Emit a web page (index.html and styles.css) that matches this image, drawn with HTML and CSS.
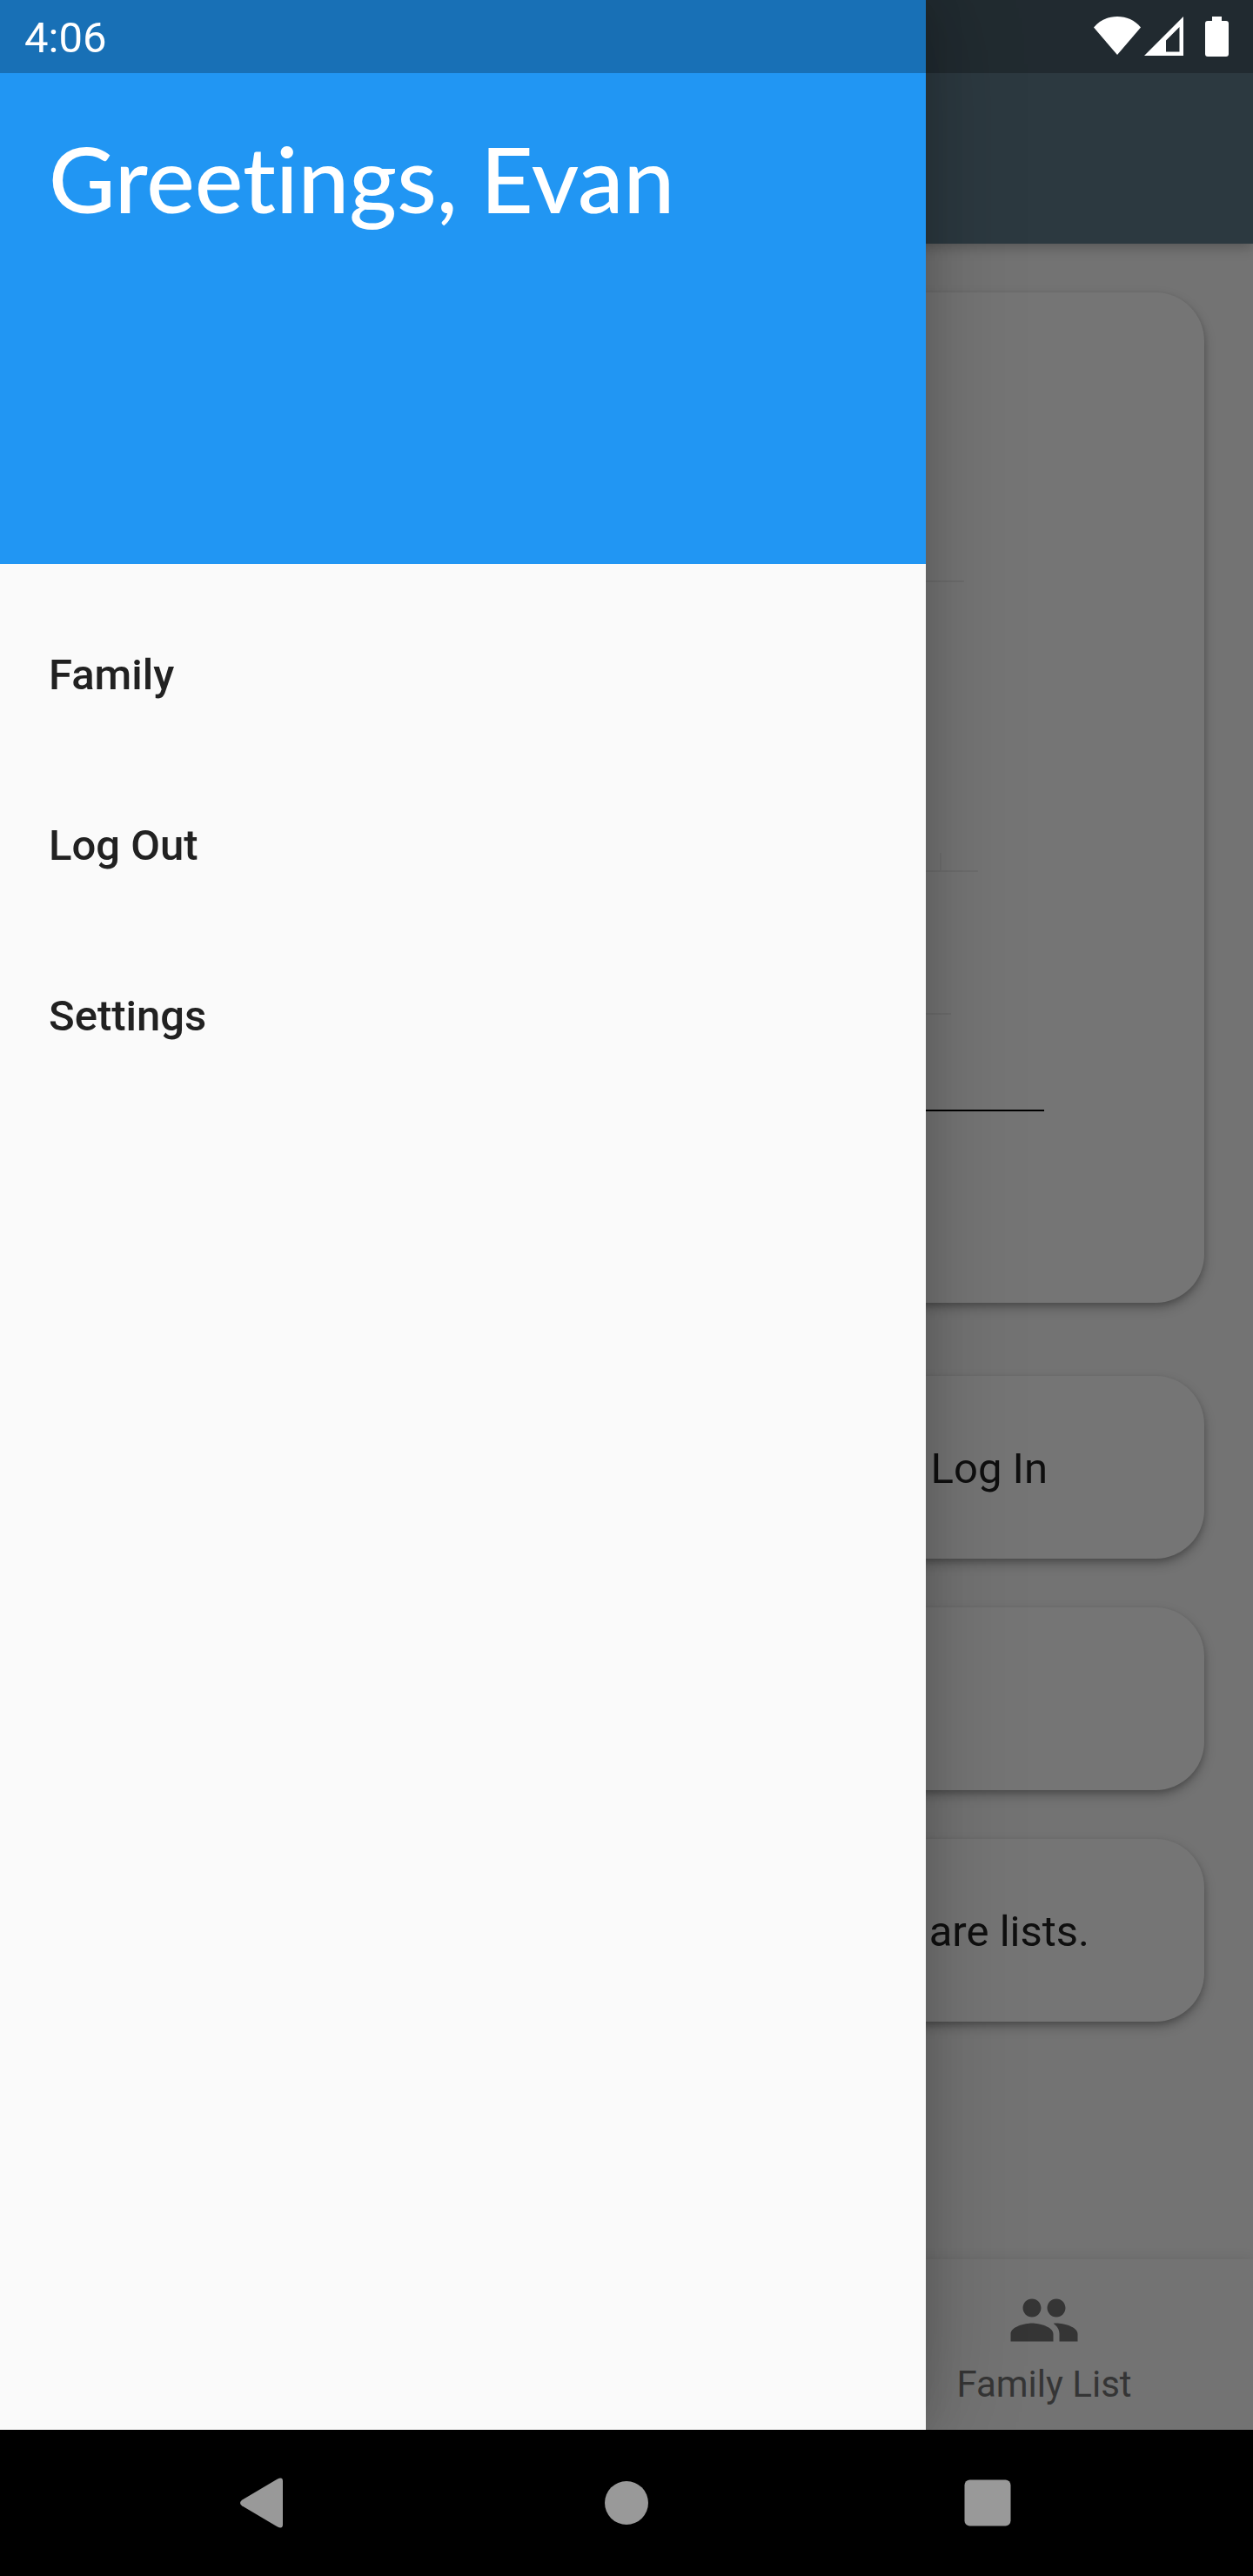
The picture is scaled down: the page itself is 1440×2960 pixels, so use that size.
FILE: index.html
```html
<!DOCTYPE html>
<html lang="en">
<head>
  <meta charset="utf-8">
  <meta name="viewport" content="width=device-width, initial-scale=1">
  <title>Family</title>
  <link rel="stylesheet" href="styles.css">
</head>
<body>
  <div class="screen">
    <div class="app">
      <div class="page">
        <header class="app-bar"></header>
        <main class="content">
          <section class="card card-form">
            <hr class="rule rule-first">
            <span class="tick"></span>
            <hr class="rule rule-second">
            <hr class="rule rule-third">
            <input class="field" type="text" aria-label="Name">
          </section>
          <button class="card card-row" type="button">Log In</button>
          <div class="card card-row"></div>
          <div class="card card-row card-wide">are lists.</div>
        </main>
        <nav class="tabs" aria-label="Sections">
          <button class="tab" type="button">
            <svg class="tab-icon" viewBox="0 0 24 24" aria-hidden="true"><path d="M16 11c1.660 0 2.990-1.340 2.990-3S17.660 5 16 5s-3 1.340-3 3 1.340 3 3 3zm-8 0c1.660 0 2.990-1.340 2.990-3S9.660 5 8 5 5 6.340 5 8s1.340 3 3 3zm0 2c-2.330 0-7 1.170-7 3.500V19h14v-2.500c0-2.330-4.670-3.500-7-3.500zm8 0c-.29 0-.62.020-.97.050 1.160.84 1.970 1.970 1.970 3.450V19h6v-2.500c0-2.330-4.670-3.500-7-3.500z"/></svg>
            <span>Family List</span>
          </button>
        </nav>
      </div>
      <div class="scrim"></div>
      <aside class="drawer">
        <header class="drawer-header">
          <h1 class="greeting">Greetings, Evan</h1>
        </header>
        <nav class="menu" aria-label="Menu">
          <a class="menu-item" href="#family">Family</a>
          <a class="menu-item" href="#logout">Log Out</a>
          <a class="menu-item" href="#settings">Settings</a>
        </nav>
      </aside>
      <div class="status-bar">
        <span class="clock">4:06</span>
        <div class="status-icons">
          <svg width="54" height="46" viewBox="0 0 54 46" aria-hidden="true"><path d="M0 12.500C7 4 16.500 0 27 0s20 4 27 12.500L27 44z"/></svg>
          <svg width="46" height="46" viewBox="0 0 46 46" aria-hidden="true"><path fill-rule="evenodd" d="M45 0v45H0zM40.500 12L25 27.500V40.500h15.500z"/></svg>
          <svg class="battery" width="27" height="46" viewBox="0 0 27 46" aria-hidden="true"><path d="M8 0h11v5h5a3 3 0 0 1 3 3v35a3 3 0 0 1-3 3H3a3 3 0 0 1-3-3V8a3 3 0 0 1 3-3h5z"/></svg>
        </div>
      </div>
    </div>
    <nav class="system-bar" aria-label="System">
      <button class="system-button" type="button" aria-label="Back">
        <svg width="84" height="84" viewBox="0 0 84 84" aria-hidden="true"><path d="M55.500 14.800Q62 11.500 62 17v50q0 5.500-6.500 2.200L15 45.300q-4-3.300 0-6.600z"/></svg>
      </button>
      <button class="system-button" type="button" aria-label="Home">
        <svg width="84" height="84" viewBox="0 0 84 84" aria-hidden="true"><circle cx="42" cy="42" r="25"/></svg>
      </button>
      <button class="system-button" type="button" aria-label="Overview">
        <svg width="84" height="84" viewBox="0 0 84 84" aria-hidden="true"><rect x="15.500" y="15.500" width="53" height="53" rx="6"/></svg>
      </button>
    </nav>
  </div>
</body>
</html>
```

FILE: styles.css
```css
* {
  box-sizing: border-box;
}

body {
  margin: 0;
  background: #000;
  font-family: Roboto, "Liberation Sans", sans-serif;
  font-size: 49px;
  line-height: 56px;
}

button {
  border: 0;
  background: none;
  color: inherit;
  font: inherit;
}

.screen {
  display: flex;
  flex-direction: column;
  min-height: 100vh;
}

.app {
  position: relative;
  display: flex;
  flex: 1;
  overflow: hidden;
}

/* Page underneath the drawer */
.page {
  display: flex;
  flex: 1;
  flex-direction: column;
  background: #fafafa;
}

.app-bar {
  height: 280px;
  background: #607d8b;
  box-shadow: 0 4px 14px rgba(0, 0, 0, 0.25);
}

.content {
  display: flex;
  flex: 1;
  flex-direction: column;
  gap: 56px;
  padding: 56px;
}

.card {
  border-radius: 56px;
  background: #fff;
  color: #212121;
  box-shadow: 0 6px 14px rgba(0, 0, 0, 0.24), 0 3px 6px rgba(0, 0, 0, 0.16);
}

.card-form {
  display: flex;
  flex-direction: column;
  align-items: center;
  margin-bottom: 28px;
  padding: 331px 184px 220px;
}

.rule {
  width: 100%;
  height: 2px;
  margin: 0;
  border: 0;
  background: #ededed;
}

.rule-first {
  max-width: 776px;
}

.rule-second {
  max-width: 808px;
}

.rule-third {
  max-width: 746px;
  margin-top: 162px;
}

.tick {
  align-self: flex-end;
  width: 2px;
  height: 20px;
  margin: 311px 118px 0 0;
  background: #f2f2f2;
}

.field {
  width: 100%;
  height: 111px;
  padding: 0;
  border: 0;
  border-bottom: 2px solid #000;
  border-radius: 0;
  outline: 0;
  background: none;
  font: inherit;
}

.card-row {
  display: flex;
  align-items: center;
  justify-content: flex-end;
  min-height: 210px;
  padding: 4px 180px 0;
}

.card-wide {
  padding: 4px 132px 0;
}

.tabs {
  display: grid;
  grid-template-columns: repeat(3, 1fr);
  background: #fafafa;
  box-shadow: 0 0 14px rgba(0, 0, 0, 0.1);
}

.tab {
  display: flex;
  grid-column: 3;
  flex-direction: column;
  align-items: center;
  gap: 6px;
  padding: 28px 0 26px;
  color: #757575;
  font-size: 42px;
  line-height: 52px;
}

.tab-icon {
  width: 84px;
  height: 84px;
  fill: currentColor;
}

.scrim {
  position: absolute;
  inset: 0;
  background: rgba(0, 0, 0, 0.54);
}

/* Drawer */
.drawer {
  position: absolute;
  inset: 0 auto 0 0;
  width: 1064px;
  max-width: 80%;
  background: #fafafa;
  box-shadow: 0 0 112px rgba(0, 0, 0, 0.2), 0 0 42px rgba(0, 0, 0, 0.14);
}

.drawer-header {
  height: 648px;
  padding: 140px 56px 28px;
  background: #2196f3;
}

.greeting {
  margin: 0;
  color: #fff;
  font-family: Lato, sans-serif;
  font-size: 105px;
  font-weight: 500;
  font-variant-ligatures: none;
  line-height: 128px;
}

.menu {
  padding-top: 28px;
}

.menu-item {
  display: flex;
  align-items: center;
  height: 196px;
  padding: 4px 56px 0;
  color: #212121;
  font-weight: 500;
  text-decoration: none;
}

/* System chrome */
.status-bar {
  position: absolute;
  inset: 0 0 auto;
  display: flex;
  align-items: center;
  justify-content: space-between;
  height: 84px;
  padding: 0 28px;
  background: rgba(0, 0, 0, 0.25);
  color: #fff;
}

.clock {
  padding-top: 4px;
}

.status-icons {
  display: flex;
  gap: 4px;
  fill: currentColor;
}

.battery {
  margin-left: 20px;
}

.system-bar {
  display: grid;
  grid-template-columns: repeat(3, 1fr);
  align-items: center;
  height: 168px;
  padding: 0 98px;
  background: #000;
}

.system-button {
  display: flex;
  justify-content: center;
  padding: 0;
  fill: #999;
}
```
